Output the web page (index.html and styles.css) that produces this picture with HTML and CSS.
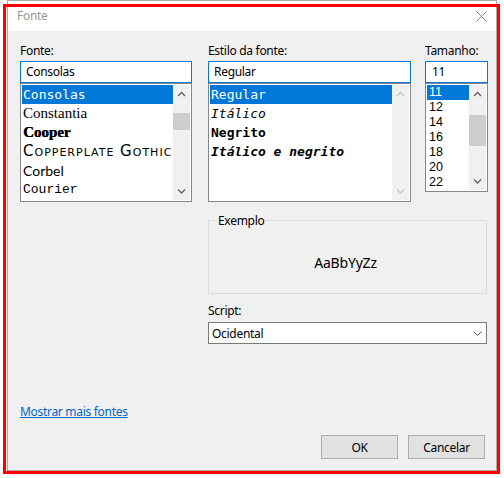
FILE: index.html
```html
<!DOCTYPE html>
<html lang="pt-BR">
<head>
<meta charset="utf-8">
<title>Fonte</title>
<link rel="stylesheet" href="styles.css">
</head>
<body>
<div class="window">
  <div class="titlebar">
    <span class="title">Fonte</span>
    <svg class="close" width="11" height="11" viewBox="0 0 11 11"><path d="M0.5 0.5L10.5 10.5M10.5 0.5L0.5 10.5" stroke="#8a8a8a" stroke-width="1" fill="none"/></svg>
  </div>
  <div class="content">
    <div class="pickers">
      <div class="col col-font">
        <span class="label">Fonte:</span>
        <div class="input">Consolas</div>
        <div class="list list-font">
          <ul class="items">
            <li class="item row19 selected f-consolas">Consolas</li>
            <li class="item row19 f-constantia">Constantia</li>
            <li class="item row19 f-cooper">Cooper</li>
            <li class="item row19 f-copperplate">Copperplate Gothic</li>
            <li class="item row19 f-corbel">Corbel</li>
            <li class="item row19 f-courier">Courier</li>
          </ul>
          <div class="scrollbar">
            <span class="sb-btn"><svg width="17" height="17" viewBox="0 0 17 17"><path d="M5 11L8.5 7.5L12 11" stroke="#606060" stroke-width="1.3" fill="none"/></svg></span>
            <span class="sb-track"><span class="sb-thumb thumb-font"></span></span>
            <span class="sb-btn"><svg width="17" height="17" viewBox="0 0 17 17"><path d="M5 6.5L8.5 10L12 6.5" stroke="#606060" stroke-width="1.3" fill="none"/></svg></span>
          </div>
        </div>
      </div>
      <div class="col col-style">
        <span class="label">Estilo da fonte:</span>
        <div class="input">Regular</div>
        <div class="list list-style">
          <ul class="items">
            <li class="item row19 mono selected">Regular</li>
            <li class="item row19 mono it">Itálico</li>
            <li class="item row19 mono bd">Negrito</li>
            <li class="item row19 mono it bd">Itálico e negrito</li>
          </ul>
          <div class="scrollbar">
            <span class="sb-btn"><svg width="17" height="17" viewBox="0 0 17 17"><path d="M5 11L8.5 7.5L12 11" stroke="#c4c4c4" stroke-width="1.3" fill="none"/></svg></span>
            <span class="sb-track"></span>
            <span class="sb-btn"><svg width="17" height="17" viewBox="0 0 17 17"><path d="M5 6.5L8.5 10L12 6.5" stroke="#c4c4c4" stroke-width="1.3" fill="none"/></svg></span>
          </div>
        </div>
      </div>
      <div class="col col-size">
        <span class="label">Tamanho:</span>
        <div class="input input-size">11</div>
        <div class="list list-size">
          <ul class="items">
            <li class="item row15 selected">11</li>
            <li class="item row15">12</li>
            <li class="item row15">14</li>
            <li class="item row15">16</li>
            <li class="item row15">18</li>
            <li class="item row15">20</li>
            <li class="item row15">22</li>
          </ul>
          <div class="scrollbar">
            <span class="sb-btn"><svg width="17" height="17" viewBox="0 0 17 17"><path d="M5 11L8.5 7.5L12 11" stroke="#606060" stroke-width="1.3" fill="none"/></svg></span>
            <span class="sb-track"><span class="sb-thumb thumb-size"></span></span>
            <span class="sb-btn"><svg width="17" height="17" viewBox="0 0 17 17"><path d="M5 6.5L8.5 10L12 6.5" stroke="#606060" stroke-width="1.3" fill="none"/></svg></span>
          </div>
        </div>
      </div>
    </div>

    <div class="lower">
      <div class="group">
        <span class="group-title">Exemplo</span>
        <span class="sample">AaBbYyZz</span>
      </div>
      <span class="label script-label">Script:</span>
      <div class="select">
        <span>Ocidental</span>
        <svg width="9" height="5" viewBox="0 0 9 5"><path d="M0.5 0.5L4.5 4.5L8.5 0.5" stroke="#555" stroke-width="1" fill="none"/></svg>
      </div>
    </div>

    <a class="link" href="#">Mostrar mais fontes</a>

    <div class="buttons">
      <button class="btn">OK</button>
      <button class="btn">Cancelar</button>
    </div>
  </div>
</div>
<div class="annotation"></div>
</body>
</html>
```
FILE: styles.css
```css
* { box-sizing: border-box; }
html, body { margin: 0; padding: 0; background: #ffffff; }
body {
  font-family: "Noto Sans", "Open Sans", sans-serif;
  font-size: 12px;
  letter-spacing: -0.3px;
  color: #000;
  width: 504px;
  height: 478px;
  position: relative;
  overflow: hidden;
}
.window {
  margin-left: 7px;
  width: 490px;
  height: 471px;
  border: 1px solid #aaaaaa;
  background: #f0f0f0;
  display: flex;
  flex-direction: column;
  box-shadow: 2px 2px 6px rgba(0,0,0,0.18);
}
.titlebar {
  height: 30px;
  flex: none;
  background: #ffffff;
  display: flex;
  align-items: center;
  justify-content: space-between;
  padding: 0 9px 0 9px;
}
.title { color: #9a9a9a; line-height: 16px; }
.close { display: block; }

.content {
  flex: 1;
  display: flex;
  flex-direction: column;
  padding: 12px 8px 0 12px;
}
.pickers { display: flex; }
.col { display: flex; flex-direction: column; flex: none; }
.col-font { width: 172px; margin-right: 16px; }
.col-style { width: 203px; margin-right: 14px; }
.col-size { width: 63px; }

.label { display: block; line-height: 16px; height: 16px; margin-bottom: 2px; }

.input {
  height: 22px;
  border: 1px solid #0078d7;
  background: #fff;
  padding: 0 5px;
  line-height: 20px;
}
.input-size { padding-left: 6px; }

.list {
  height: 119px;
  border: 1px solid #828790;
  background: #fff;
  padding: 1px;
  display: flex;
}
.list-size { height: 109px; }
.items { flex: 1; margin: 0; padding: 0; list-style: none; overflow: hidden; min-width: 0; }
.item { white-space: nowrap; overflow: hidden; padding-left: 1px; letter-spacing: 0; }
.row19 { height: 19px; line-height: 19px; }
.row15 {
  height: 15px;
  line-height: 15px;
  padding-left: 2px;
  font-family: "Liberation Sans", sans-serif;
  font-size: 12.5px;
}
.selected { background: #0078d7; color: #fff; }

.f-consolas, .mono { font-family: "DejaVu Sans Mono", monospace; font-size: 13px; }
.f-constantia { font-family: "Liberation Serif", serif; font-size: 15px; }
.f-cooper {
  font-family: "Liberation Serif", serif;
  font-weight: bold;
  font-size: 15px;
  text-shadow: 0.4px 0 0 #000;
}
.f-copperplate {
  font-family: "DejaVu Sans", sans-serif;
  font-variant: small-caps;
  font-size: 15px;
  letter-spacing: 1px;
}
.f-corbel { font-family: "Lato", sans-serif; font-size: 14px; }
.f-courier { font-family: "Liberation Mono", monospace; font-size: 13px; }
.it { font-style: italic; }
.bd { font-weight: bold; }

.scrollbar {
  width: 17px;
  flex: none;
  background: #f0f0f0;
  display: flex;
  flex-direction: column;
}
.sb-btn { height: 17px; flex: none; display: block; }
.sb-btn svg { display: block; }
.sb-track { flex: 1; display: block; }
.sb-thumb { display: block; background: #cdcdcd; }
.thumb-font { margin-top: 11px; height: 17px; }
.thumb-size { margin-top: 13px; height: 31px; }

.lower { margin-left: 188px; width: 279px; }
.group {
  margin-top: 18px;
  height: 74px;
  border: 1px solid #dcdcdc;
  position: relative;
  display: flex;
  align-items: center;
  justify-content: center;
  padding-top: 10px;
}
.group-title {
  position: absolute;
  top: -8px;
  left: 8px;
  padding: 0 1px;
  background: #f0f0f0;
  line-height: 16px;
}
.sample { font-size: 14px; letter-spacing: -0.2px; margin-right: 4px; }
.script-label { margin-top: 9px; margin-bottom: 3px; }
.select {
  height: 22px;
  border: 1px solid #7a7a7a;
  background: #fff;
  display: flex;
  align-items: center;
  justify-content: space-between;
  padding: 0 4px 0 3px;
}
.select svg { display: block; }

.link {
  align-self: flex-start;
  margin-top: 60px;
  color: #0066cc;
  text-decoration: underline;
  line-height: 16px;
}
.buttons {
  display: flex;
  justify-content: flex-end;
  gap: 10px;
  margin-top: 15px;
  margin-right: 3px;
}
.btn {
  width: 77px;
  height: 24px;
  background: #e1e1e1;
  border: 1px solid #adadad;
  font-family: inherit;
  font-size: 12px;
  letter-spacing: -0.3px;
  color: #000;
  padding: 0;
}

.annotation {
  position: absolute;
  left: 3px;
  top: 4px;
  width: 497px;
  height: 470px;
  border: 3px solid #ff0000;
  pointer-events: none;
}
```
